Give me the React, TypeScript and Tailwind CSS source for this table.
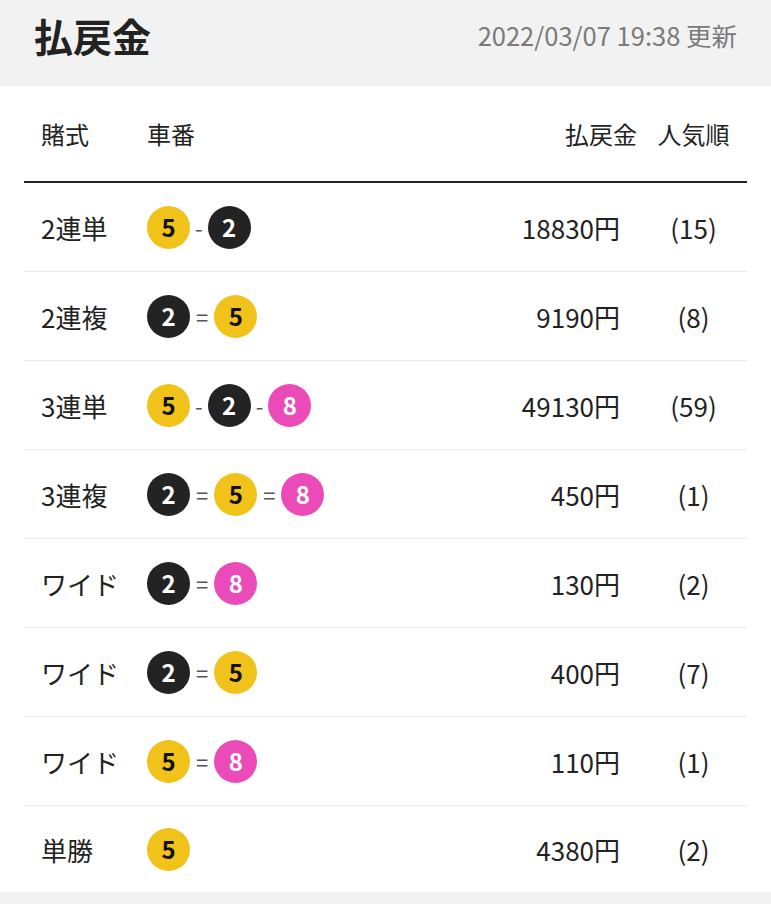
const ROWS = [
  { type: "2連単", cars: [5, 2], sep: "-", pay: "18830円", pop: "(15)" },
  { type: "2連複", cars: [2, 5], sep: "=", pay: "9190円", pop: "(8)" },
  { type: "3連単", cars: [5, 2, 8], sep: "-", pay: "49130円", pop: "(59)" },
  { type: "3連複", cars: [2, 5, 8], sep: "=", pay: "450円", pop: "(1)" },
  { type: "ワイド", cars: [2, 8], sep: "=", pay: "130円", pop: "(2)" },
  { type: "ワイド", cars: [2, 5], sep: "=", pay: "400円", pop: "(7)" },
  { type: "ワイド", cars: [5, 8], sep: "=", pay: "110円", pop: "(1)" },
  { type: "単勝", cars: [5], sep: "", pay: "4380円", pop: "(2)" },
];

function Ball({ n }: { n: number }) {
  const cls =
    n === 5
      ? "bg-[#f1c31a] text-[#111]"
      : n === 8
        ? "bg-[#ea4bb8] text-white"
        : "bg-[#232323] text-white";
  return (
    <span className={`w-[43px] h-[43px] rounded-full flex items-center justify-center text-[24px] font-bold leading-none ${cls}`}>
      {n}
    </span>
  );
}

export default function App() {
  return (
    <div className="min-h-screen bg-[#f2f2f2] text-[#222]" style={{ fontFamily: '"Noto Sans CJK JP", "Noto Sans", sans-serif' }}>
      <header className="h-[86px] pb-[16px] px-[34px] flex items-center justify-between">
        <h1 className="text-[39px] font-bold leading-none text-[#222]">払戻金</h1>
        <span className="text-[25.5px] text-[#7a7a7a] leading-none">2022/03/07 19:38 更新</span>
      </header>

      <div className="bg-white px-[24px]">
        <div className="h-[97px] flex items-center border-b-2 border-[#222] text-[24px]">
          <div className="w-[123px] pl-[17px]">賭式</div>
          <div className="flex-1">車番</div>
          <div className="w-[160px] text-right pr-[3px]">払戻金</div>
          <div className="w-[107px] text-center">人気順</div>
        </div>

        {ROWS.map((r, i) => (
          <div
            key={i}
            className={`flex items-center text-[26px] ${i < ROWS.length - 1 ? "h-[89px] border-b border-[#ebebeb]" : "h-[86px]"}`}
          >
            <div className="w-[123px] pl-[17px]">{r.type}</div>
            <div className="flex-1 flex items-center">
              {r.cars.map((c, j) => (
                <span key={j} className="flex items-center">
                  {j > 0 && (
                    <span className={`text-[22px] text-[#555] leading-none ${r.sep === "=" ? "mx-[6px]" : "mx-[5px]"}`}>
                      {r.sep}
                    </span>
                  )}
                  <Ball n={c} />
                </span>
              ))}
            </div>
            <div className="w-[160px] text-right pr-[20px]">{r.pay}</div>
            <div className="w-[107px] text-center">{r.pop}</div>
          </div>
        ))}
      </div>
    </div>
  );
}
